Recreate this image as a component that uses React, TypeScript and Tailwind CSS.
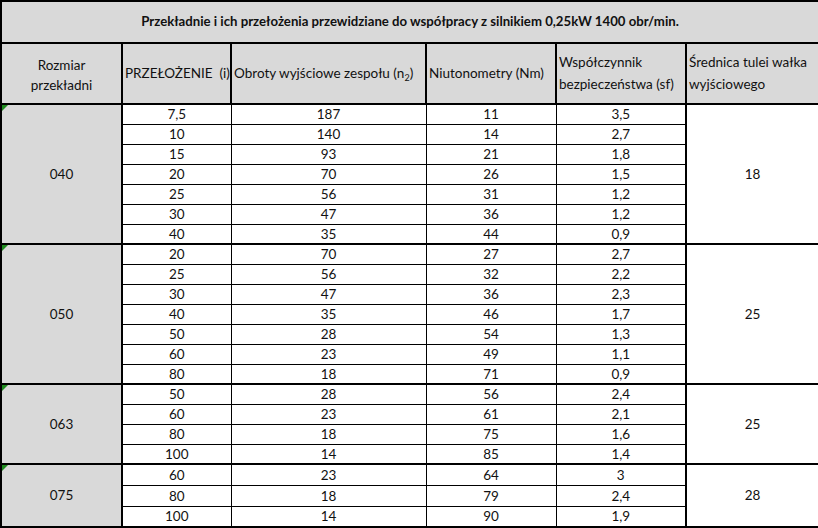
import React from "react";

type Group = {
  size: string;
  bore: string;
  rows: [string, string, string, string][];
};

const groups: Group[] = [
  {
    size: "040",
    bore: "18",
    rows: [
      ["7,5", "187", "11", "3,5"],
      ["10", "140", "14", "2,7"],
      ["15", "93", "21", "1,8"],
      ["20", "70", "26", "1,5"],
      ["25", "56", "31", "1,2"],
      ["30", "47", "36", "1,2"],
      ["40", "35", "44", "0,9"],
    ],
  },
  {
    size: "050",
    bore: "25",
    rows: [
      ["20", "70", "27", "2,7"],
      ["25", "56", "32", "2,2"],
      ["30", "47", "36", "2,3"],
      ["40", "35", "46", "1,7"],
      ["50", "28", "54", "1,3"],
      ["60", "23", "49", "1,1"],
      ["80", "18", "71", "0,9"],
    ],
  },
  {
    size: "063",
    bore: "25",
    rows: [
      ["50", "28", "56", "2,4"],
      ["60", "23", "61", "2,1"],
      ["80", "18", "75", "1,6"],
      ["100", "14", "85", "1,4"],
    ],
  },
  {
    size: "075",
    bore: "28",
    rows: [
      ["60", "23", "64", "3"],
      ["80", "18", "79", "2,4"],
      ["100", "14", "90", "1,9"],
    ],
  },
];

// small green error marker Excel puts in the corner of a cell
function Marker() {
  return (
    <svg className="absolute left-0 top-0" width="6" height="6" viewBox="0 0 6 6">
      <polygon points="0,0 6,0 0,6" fill="#1e8a1e" />
    </svg>
  );
}

export default function App() {
  const head = "border-2 border-black bg-[#d9d9d9] px-[2px] font-normal whitespace-nowrap";

  return (
    <div className="w-[818px] h-[528px] bg-white text-[13.5px] text-[#111] font-['Lato',sans-serif] overflow-hidden">
      <table className="w-[818px] table-fixed border-collapse border-2 border-black">
        <colgroup>
          <col className="w-[121px]" />
          <col className="w-[109px]" />
          <col className="w-[195px]" />
          <col className="w-[130px]" />
          <col className="w-[130px]" />
          <col className="w-[133px]" />
        </colgroup>
        <thead>
          <tr className="h-[42px]">
            <th colSpan={6} className="border-2 border-black bg-[#d9d9d9] text-center font-bold text-[13.2px]">
              Przekładnie i ich przełożenia przewidziane do współpracy z silnikiem 0,25kW 1400 obr/min.
            </th>
          </tr>
          <tr className="h-[61px]">
            <th className={`${head} text-center leading-[20px] pt-[2px]`}>
              Rozmiar
              <br />
              przekładni
            </th>
            <th className={`${head} text-left`}>PRZEŁOŻENIE&nbsp; (i)</th>
            <th className={`${head} text-left`}>
              Obroty wyjściowe zespołu (n<sub className="text-[9px]">2</sub>)
            </th>
            <th className={`${head} text-left`}>Niutonometry (Nm)</th>
            <th className={`${head} text-left leading-[22px] pb-[2px]`}>
              Współczynnik
              <br />
              bezpieczeństwa (sf)
            </th>
            <th className={`${head} text-left leading-[22px] pb-[2px]`}>
              Średnica tulei wałka
              <br />
              wyjściowego
            </th>
          </tr>
        </thead>
        <tbody>
          {groups.map((g, gi) =>
            g.rows.map((r, i) => (
              <tr key={g.size + i} className={gi === groups.length - 1 ? "h-[21px]" : "h-[20px]"}>
                {i === 0 && (
                  <td rowSpan={g.rows.length} className="relative border-2 border-black bg-[#d9d9d9] text-center">
                    <Marker />
                    {g.size}
                  </td>
                )}
                {r.map((v, j) => (
                  <td
                    key={j}
                    className={`border border-black p-0 text-center leading-[18px] ${i === 0 ? "border-t-2" : ""}`}
                  >
                    {v}
                  </td>
                ))}
                {i === 0 && (
                  <td rowSpan={g.rows.length} className="border-2 border-black text-center">
                    {g.bore}
                  </td>
                )}
              </tr>
            ))
          )}
        </tbody>
      </table>
    </div>
  );
}
